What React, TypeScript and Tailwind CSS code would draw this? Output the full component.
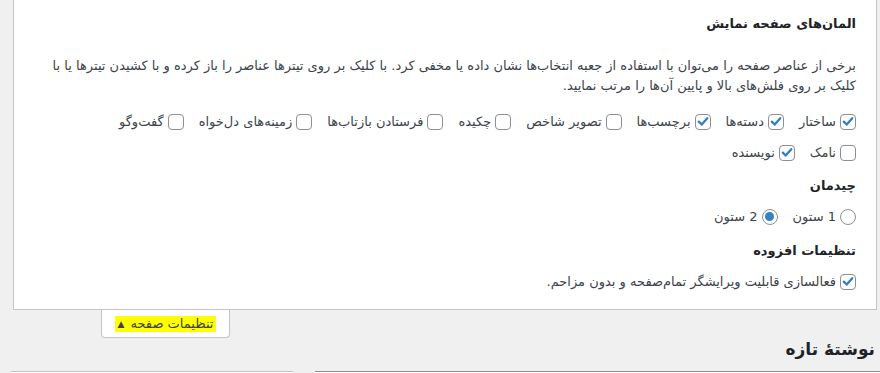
import React from 'react';

const Check = ({ checked, label }: { checked?: boolean; label: string }) => (
  <label className="flex items-center gap-[4px] leading-[31px]">
    <span className="flex h-4 w-4 shrink-0 items-center justify-center rounded-[4px] border border-[#8c8f94] bg-white">
      {checked && (
        <svg viewBox="0 0 16 16" className="h-[15px] w-[15px]">
          <path d="M3.2 8.1 L6.5 11.5 L12.9 4.3" fill="none" stroke="#2f7fc4" strokeWidth="2.6" strokeLinecap="round" strokeLinejoin="round" />
        </svg>
      )}
    </span>
    <span>{label}</span>
  </label>
);

const Radio = ({ checked, label }: { checked?: boolean; label: string }) => (
  <label className="flex items-center gap-[4px] leading-[31px]">
    <span className="flex h-4 w-4 shrink-0 items-center justify-center rounded-full border border-[#8c8f94] bg-white">
      {checked && <span className="h-[9px] w-[9px] rounded-full bg-[#3582c4]" />}
    </span>
    <span>{label}</span>
  </label>
);

const Heading = ({ children, className = '' }: { children: React.ReactNode; className?: string }) => (
  <h5 className={'text-[13px] font-bold leading-5 text-[#1d2327] ' + className}>{children}</h5>
);

export default function App() {
  const boxes = [
    { label: 'ساختار', checked: true },
    { label: 'دسته‌ها', checked: true },
    { label: 'برچسب‌ها', checked: true },
    { label: 'تصویر شاخص' },
    { label: 'چکیده' },
    { label: 'فرستادن بازتاب‌ها' },
    { label: 'زمینه‌های دل‌خواه' },
    { label: 'گفت‌وگو' },
  ];

  return (
    <div dir="rtl" className="h-[373px] overflow-hidden bg-[#f0f0f1] font-['DejaVu_Sans',sans-serif] text-[13px] text-[#3c434a]">
      {/* screen options panel */}
      <div className="ml-[13px] mr-[3px] border border-t-0 border-[#c3c4c7] bg-white px-5 pb-3 pt-[14px]">
        <Heading>المان‌های صفحه نمایش</Heading>
        <p className="mt-[22px] leading-[20px]">
          برخی از عناصر صفحه را می‌توان با استفاده از جعبه انتخاب‌ها نشان داده یا مخفی کرد. با کلیک بر روی تیترها عناصر را باز کرده و با کشیدن تیترها یا با
          <br />
          کلیک بر روی فلش‌های بالا و پایین آن‌ها را مرتب نمایید.
        </p>
        <div className="mt-[10px] flex gap-[15px]">
          {boxes.map(b => (
            <Check key={b.label} label={b.label} checked={b.checked} />
          ))}
        </div>
        <div className="flex gap-[15px]">
          <Check label="نامک" />
          <Check label="نویسنده" checked />
        </div>

        <Heading className="mt-2">چیدمان</Heading>
        <div className="mt-[5px] flex gap-[15px]">
          <Radio label="1 ستون" />
          <Radio label="2 ستون" checked />
        </div>

        <Heading className="mt-[9px]">تنظیمات افزوده</Heading>
        <div className="mt-[5px] flex">
          <Check label="فعالسازی قابلیت ویرایشگر تمام‌صفحه و بدون مزاحم." checked />
        </div>
      </div>

      {/* tab */}
      <div className="flex h-[28px] justify-end">
        <button className="ml-[101px] flex h-[28px] w-[129px] items-center justify-center rounded-b-[4px] border border-t-0 border-[#c3c4c7] bg-white">
          <span className="flex h-4 items-center gap-[6px] bg-[#ffff00] px-[3px] leading-4 text-[#3c434a]">
            تنظیمات صفحه
            <span className="text-[9px]">▲</span>
          </span>
        </button>
      </div>

      <h1 className="-mt-[2px] mr-[5px] h-[26px] text-[17px] font-bold leading-[26px] text-[#1d2327]">نوشتهٔ تازه</h1>

      <div className="mt-[9px] flex gap-[22px] pl-[11px]">
        <div className="h-4 flex-1 border-t border-[#8c8f94] bg-white" />
        <div className="h-4 w-[282px] border-t border-[#c3c4c7] bg-white" />
      </div>
    </div>
  );
}
